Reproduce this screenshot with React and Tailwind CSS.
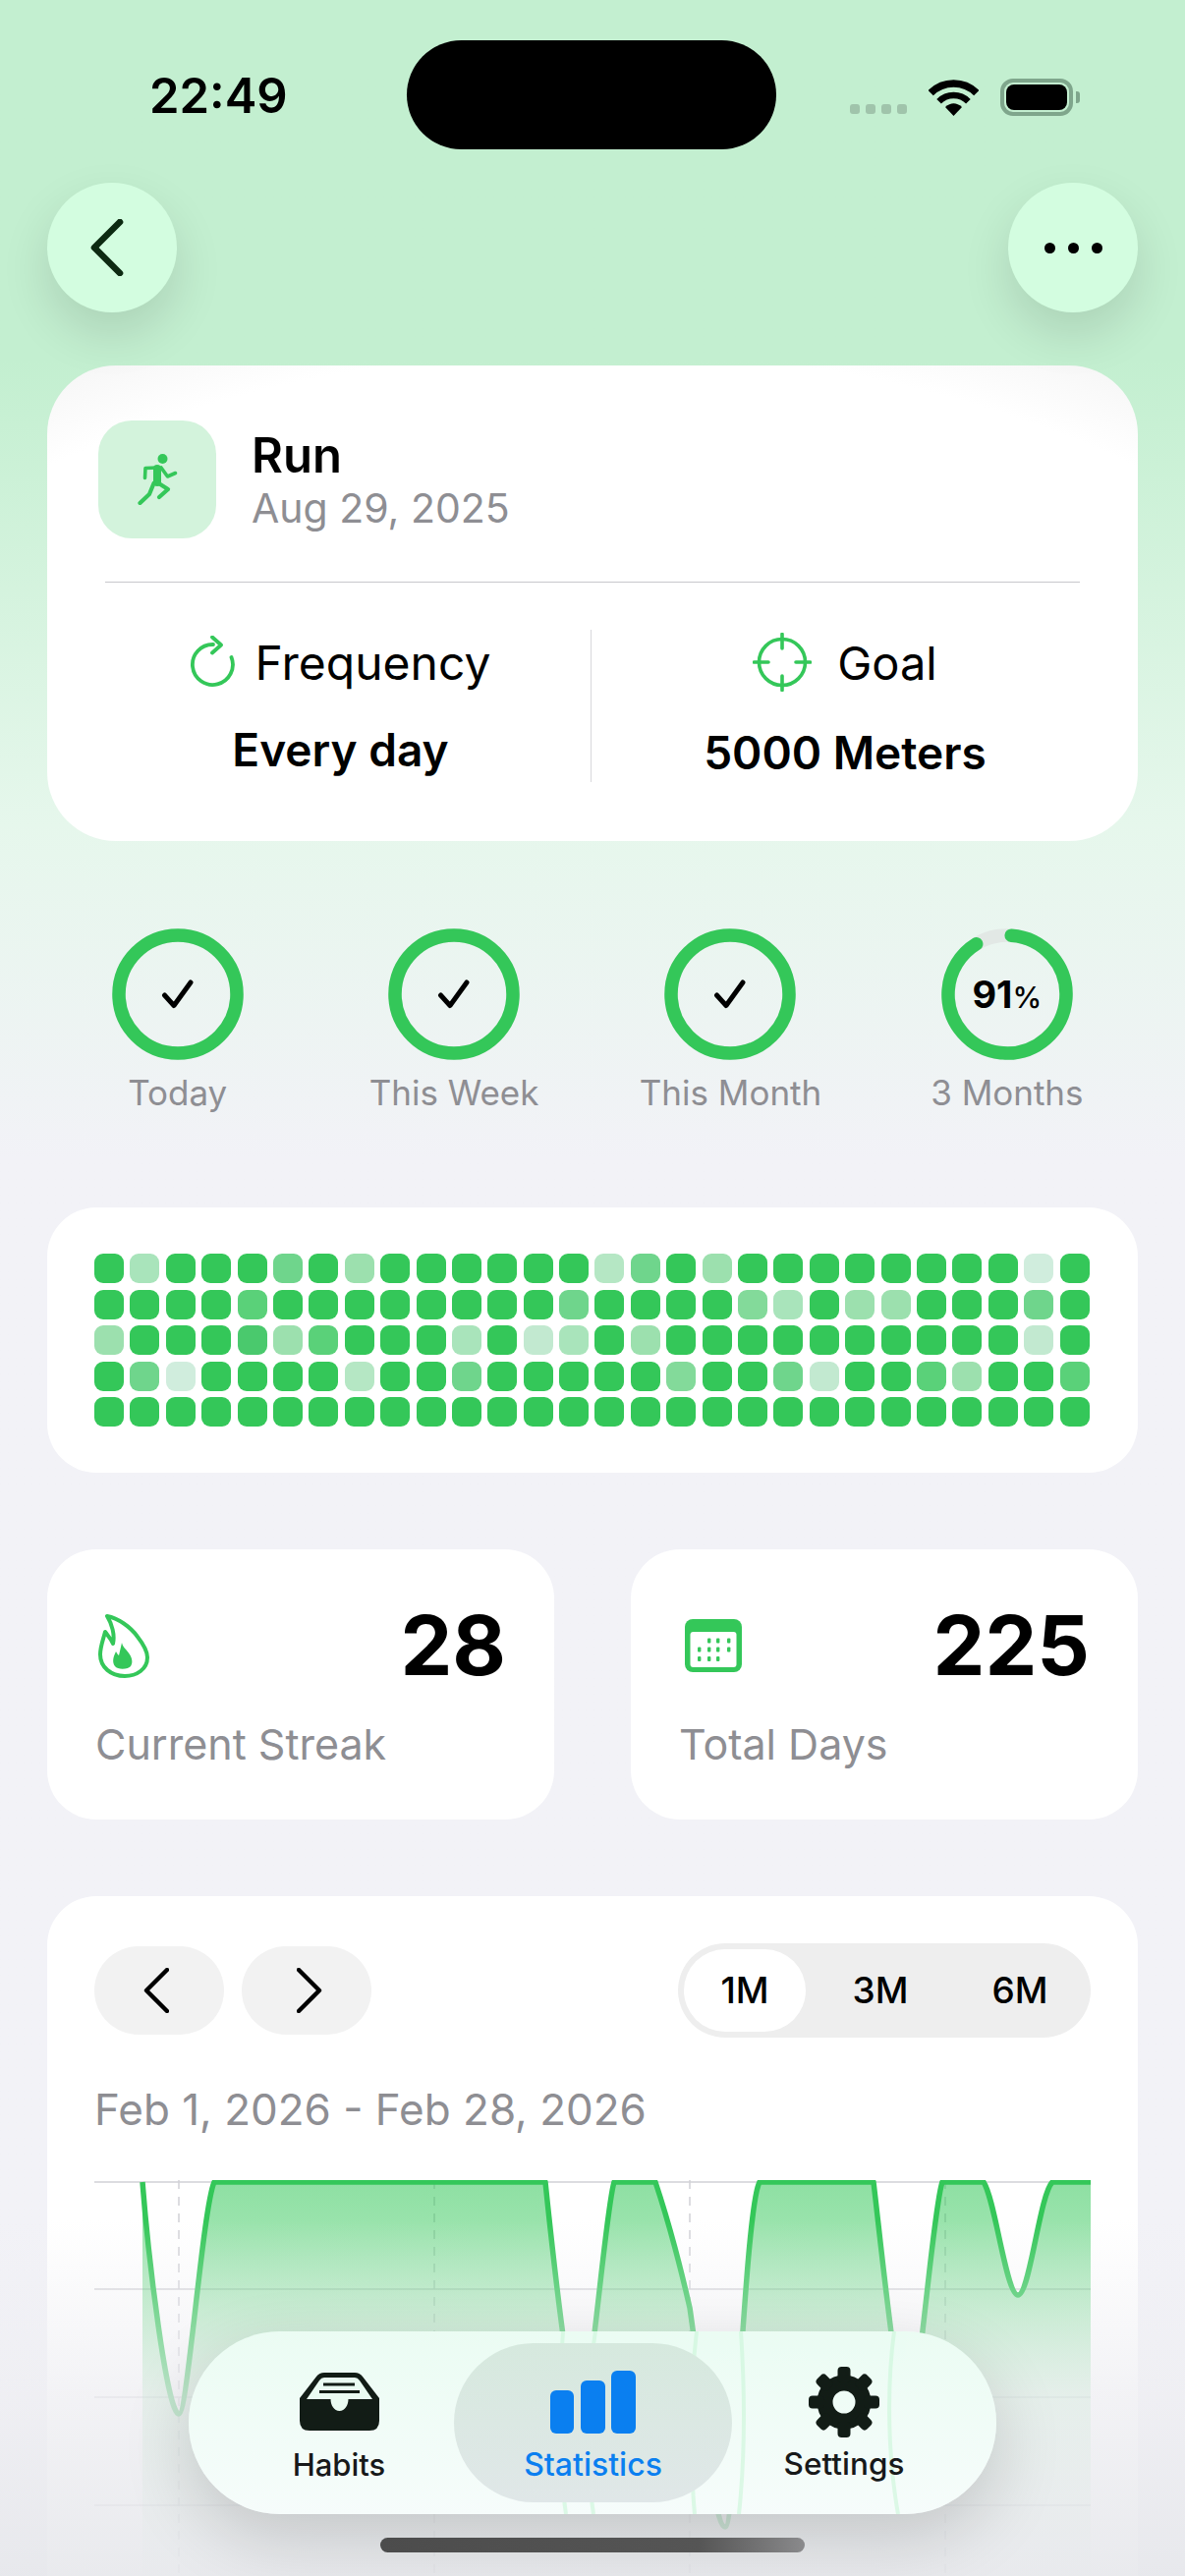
import React from "react";

const heatRows = [
  ".f...c.e......gc.e........i.",
  "....b........c....df.ee...c.",
  "e...aeb...f.hf.e..........h.",
  ".ci....g..c.....d..ch..be..b",
  "............................",
];

const heatColors = {
  ".": "bg-[#34c759]",
  a: "bg-[#4ac96d]",
  b: "bg-[#5ad179]",
  c: "bg-[#6fd58c]",
  d: "bg-[#83da9a]",
  e: "bg-[#9ce0ae]",
  f: "bg-[#a9e4bb]",
  g: "bg-[#b5e7c4]",
  h: "bg-[#c2e9d0]",
  i: "bg-[#d0eddd]",
};

const curve =
  "M49 2 C55 80 74 238 86 238 C95 238 110 30 122 2 L459 2 C465 60 484 240 494 240 C504 240 520 30 529 2 L571 2 C577 20 590 60 606 130 C620 225 630 353 642 353 C652 353 662 30 677 2 L793 2 C800 60 818 240 828 240 C838 240 853 30 863 2 L905 2 C917 20 928 117 940 117 C952 117 962 15 975 2 L1014 2";

function Wifi() {
  return (
    <svg width="51" height="37" viewBox="0 0 51 37" fill="none">
      <path d="M2.2 13.7 A33 33 0 0 1 48.8 13.7" stroke="#000" strokeWidth="7.5" />
      <path d="M10.6 22.2 A21 21 0 0 1 40.4 22.2" stroke="#000" strokeWidth="6.5" />
      <path d="M25.5 37 L17 28 Q25.5 20.5 34 28 Z" fill="#000" />
    </svg>
  );
}

function StatusBar() {
  return (
    <div className="flex h-[111px] mt-[41px] items-center">
      <div className="w-[414px] pl-[152px] pt-[1px] text-[49px] font-semibold text-black tracking-[0px] leading-none">22:49</div>
      <div className="w-[376px] h-[111px] rounded-[56px] bg-black" />
      <div className="flex items-center pl-[75px] pt-[5px]">
        <div className="flex gap-[6px] mt-[23px]">
          <div className="w-[10px] h-[10px] rounded-[3px] bg-[#a0c4ab]" />
          <div className="w-[10px] h-[10px] rounded-[3px] bg-[#a0c4ab]" />
          <div className="w-[10px] h-[10px] rounded-[3px] bg-[#a0c4ab]" />
          <div className="w-[10px] h-[10px] rounded-[3px] bg-[#a0c4ab]" />
        </div>
        <div className="ml-[22px]"><Wifi /></div>
        <div className="ml-[22px] w-[74px] h-[38px] rounded-[13px] border-[4px] border-[#7fa68c] p-[2px]">
          <div className="w-full h-full rounded-[8px] bg-black" />
        </div>
        <div className="ml-[3px] w-[4px] h-[12px] rounded-r-[3px] bg-[#7fa68c]" />
      </div>
    </div>
  );
}

function RunIcon() {
  return (
    <svg width="41" height="52" viewBox="0 0 41 52" fill="none" stroke="#34c759" strokeLinecap="round" strokeLinejoin="round">
      <circle cx="25.5" cy="5" r="5" fill="#34c759" stroke="none" />
      <path d="M20 15 L20 29" strokeWidth="8" />
      <path d="M20 14 L8 14.5 L7.5 24.5" strokeWidth="3.6" />
      <path d="M24 14 L30.5 23 L38.5 19.5" strokeWidth="3.6" />
      <path d="M20 29 L31 36 L22 44" strokeWidth="4.2" />
      <path d="M16.5 30 L12 41 L2.5 50" strokeWidth="4.2" />
    </svg>
  );
}

function RepeatIcon() {
  return (
    <svg width="46" height="54" viewBox="0 0 46 54" fill="none" stroke="#34c759" strokeWidth="3.8" strokeLinecap="round" strokeLinejoin="round">
      <path d="M23 9 A20.5 20.5 0 1 0 41.5 22" />
      <path d="M22 1.5 L31 9.5 L22 17.5" />
    </svg>
  );
}

function GoalIcon() {
  return (
    <svg width="60" height="60" viewBox="0 0 60 60" fill="none" stroke="#34c759" strokeWidth="3.6" strokeLinecap="round">
      <circle cx="30" cy="30" r="23.5" />
      <path d="M30 1.5 V16 M30 44 V58.5 M1.5 30 H16 M44 30 H58.5" />
    </svg>
  );
}

function Ring({ label, percent }) {
  const r = 60;
  const c = 2 * Math.PI * r;
  return (
    <div className="w-[281.4px] flex flex-col items-center">
      <div className="relative w-[134px] h-[134px] flex items-center justify-center">
        <svg className="absolute inset-0" width="134" height="134" viewBox="0 0 134 134" fill="none">
          <circle cx="67" cy="67" r={r} stroke="#e2e8e5" strokeWidth="13.5" />
          {percent ? (
            <circle
              cx="67"
              cy="67"
              r={r}
              stroke="#34c759"
              strokeWidth="13.5"
              strokeLinecap="round"
              strokeDasharray={`${c * 0.9} ${c}`}
              transform="rotate(-86 67 67)"
            />
          ) : (
            <circle cx="67" cy="67" r={r} stroke="#34c759" strokeWidth="13.5" />
          )}
          {!percent && <path d="M53.5 68 L63 78.5 L80 55" stroke="#000" strokeWidth="5" strokeLinecap="round" strokeLinejoin="round" />}
        </svg>
        {percent && (
          <div className="relative flex items-baseline font-bold text-black leading-none">
            <span className="text-[38px]">{percent}</span>
            <span className="text-[30px] font-medium">%</span>
          </div>
        )}
      </div>
      <div className="mt-[11px] text-[35px] leading-[44px] text-[#8e8e93]">{label}</div>
    </div>
  );
}

function Heatmap() {
  return (
    <div className="mt-[95px] mx-[48px] h-[270px] rounded-[50px] bg-white px-[48px] pt-[47px] flex flex-col gap-[6.5px]">
      {heatRows.map((row, i) => (
        <div key={i} className="flex gap-[6.4px]">
          {row.split("").map((c, j) => (
            <div key={j} className={`w-[30px] h-[30px] rounded-[9px] ${heatColors[c]}`} />
          ))}
        </div>
      ))}
    </div>
  );
}

function FlameIcon() {
  return (
    <svg className="ml-[3px]" width="52" height="65" viewBox="0 0 52 65" fill="none">
      <path
        d="M9 2 C20 4 33 13 40 23 C47 32 50 38 50 44 C50 56 39 63 27 63 C13 63 2 54 2 41 C2 33 5 26 7 18 C10 22 13 25 15 30 C17 21 14 10 9 2 Z"
        stroke="#34c759"
        strokeWidth="4"
        strokeLinejoin="round"
      />
      <path
        d="M24 29 C25 34 29 36 32 41 C35 46 35 50 33 53 C31 56 20 57 17 53 C14 49 15 44 18 38 C19 40 20 41 21 42 C22 38 23 33 24 29 Z"
        fill="#34c759"
      />
    </svg>
  );
}

function CalendarIcon() {
  return (
    <svg className="ml-[6px]" width="58" height="54" viewBox="0 0 58 54">
      <rect width="58" height="54" rx="8" fill="#34c759" />
      <rect x="5.5" y="13" width="47" height="36" rx="3" fill="#fff" />
      <g fill="#34c759">
        <rect x="23" y="19.5" width="3.4" height="5" rx="1" />
        <rect x="32" y="19.5" width="3.4" height="5" rx="1" />
        <rect x="43" y="19.5" width="3.4" height="5" rx="1" />
        <rect x="13" y="28.5" width="3.4" height="5" rx="1" />
        <rect x="23" y="28.5" width="3.4" height="5" rx="1" />
        <rect x="32" y="28.5" width="3.4" height="5" rx="1" />
        <rect x="43" y="28.5" width="3.4" height="5" rx="1" />
        <rect x="13" y="38" width="3.4" height="5" rx="1" />
        <rect x="23" y="38" width="3.4" height="5" rx="1" />
        <rect x="32" y="38" width="3.4" height="5" rx="1" />
      </g>
    </svg>
  );
}

function StatCard({ icon, value, label }) {
  return (
    <div className="w-[516px] h-[275px] rounded-[50px] bg-white px-[49px] pt-[64px]">
      <div className="flex items-center justify-between h-[68px]">
        {icon}
        <div className="text-[84px] font-bold text-black leading-none">{value}</div>
      </div>
      <div className="mt-[38px] text-[43px] leading-[56px] text-[#8e8e93]">{label}</div>
    </div>
  );
}

function Chevron({ dir }) {
  return (
    <svg width="26" height="46" viewBox="0 0 26 46" fill="none" stroke="#000" strokeWidth="4.4" strokeLinecap="round" strokeLinejoin="round">
      <path d={dir === "left" ? "M24 2 L3 23 L24 44" : "M2 2 L23 23 L2 44"} />
    </svg>
  );
}

function Chart() {
  return (
    <svg className="mt-[42px]" width="1014" height="420" viewBox="0 0 1014 420" fill="none">
      <defs>
        <linearGradient id="area" x1="0" y1="0" x2="0" y2="400" gradientUnits="userSpaceOnUse">
          <stop offset="0" stopColor="#34c759" stopOpacity="0.56" />
          <stop offset="1" stopColor="#34c759" stopOpacity="0.02" />
        </linearGradient>
      </defs>
      <path d="M0 2 H1014 M0 111 H1014 M0 221 H1014 M0 331 H1014" stroke="#d1d1d6" strokeWidth="1.5" />
      <path d="M86 0 V420 M346 0 V420 M606 0 V420 M866 0 V420" stroke="#d1d1d6" strokeWidth="1.5" strokeDasharray="9 8" />
      <path d={`${curve} L1014 420 L49 420 Z`} fill="url(#area)" />
      <path d={curve} stroke="#34c759" strokeWidth="5.5" strokeLinejoin="round" />
    </svg>
  );
}

function ChartCard() {
  return (
    <div className="mt-[78px] mx-[48px] h-[760px] rounded-t-[50px] bg-white px-[48px] pt-[48px]">
      <div className="flex items-center justify-between h-[96px]">
        <div className="flex gap-[18px]">
          <div className="w-[132px] h-[90px] rounded-[45px] bg-[#f2f2f2] flex items-center justify-center pr-[6px]"><Chevron dir="left" /></div>
          <div className="w-[132px] h-[90px] rounded-[45px] bg-[#f2f2f2] flex items-center justify-center pl-[6px]"><Chevron dir="right" /></div>
        </div>
        <div className="w-[420px] h-[96px] rounded-[48px] bg-[#eeeeee] p-[6px] flex items-center text-[37px] font-medium text-black">
          <div className="w-[126px] h-[84px] rounded-[42px] bg-white flex items-center justify-center">1M</div>
          <div className="w-[154px] text-center">3M</div>
          <div className="w-[134px] text-center">6M</div>
        </div>
      </div>
      <div className="mt-[43px] text-[44px] leading-[60px] text-[#8e8e93]">Feb 1, 2026 - Feb 28, 2026</div>
      <Chart />
    </div>
  );
}

function GearIcon() {
  const teeth = [0, 45, 90, 135, 180, 225, 270, 315];
  return (
    <svg width="72" height="72" viewBox="0 0 72 72">
      <circle cx="36" cy="36" r="19.5" fill="none" stroke="#121c16" strokeWidth="16" />
      {teeth.map((a) => (
        <rect key={a} x="29.5" y="0" width="13" height="16" rx="4" fill="#121c16" transform={`rotate(${a} 36 36)`} />
      ))}
    </svg>
  );
}

function InboxIcon() {
  return (
    <svg width="81" height="59" viewBox="0 0 81 59">
      <path d="M0 26 L17 4 Q20 0 25 0 H56 Q61 0 64 4 L81 26 V49 Q81 59 71 59 H10 Q0 59 0 49 Z" fill="#121c16" />
      <path d="M7 27 L20 8 Q22 5 25 5 H56 Q59 5 61 8 L74 27 H49.5 C49.5 33 46 39 40.5 39 C35 39 31.5 33 31.5 27 Z" fill="#eafbf2" />
      <path d="M24 12 H56 M20 19.5 H61" stroke="#121c16" strokeWidth="3" />
    </svg>
  );
}

function BarsIcon() {
  return (
    <svg width="87" height="64" viewBox="0 0 87 64" fill="#0a7ff0">
      <rect x="0" y="20" width="24" height="44" rx="6" />
      <rect x="31" y="10" width="25" height="54" rx="6" />
      <rect x="62" y="0" width="25" height="64" rx="6" />
    </svg>
  );
}

function TabBar() {
  return (
    <div className="absolute left-[192px] top-[2373px] w-[822px] h-[186px] rounded-[93px] overflow-hidden bg-linear-to-b from-[#ebfcf3] to-[#f6fcfb] shadow-[0_24px_70px_rgba(0,0,0,0.16)] flex items-center pl-[36px]">
      <svg className="absolute inset-0" width="822" height="186" viewBox="0 0 822 186" fill="none" stroke="#c6f5d5" strokeWidth="4" opacity="0.55">
        <path d="M381 0 C376 60 376 130 384 186" />
        <path d="M414 0 C404 60 404 130 412 186" />
        <path d="M517 0 C510 60 510 130 515 186" />
        <path d="M562 0 C566 60 566 130 560 186" />
        <path d="M718 0 C710 60 712 130 722 186" />
      </svg>
      <div className="relative w-[234px] h-[162px] flex flex-col items-center pt-[30px]">
        <InboxIcon />
        <div className="mt-[17px] text-[31px] leading-[36px] font-medium text-[#17191a]">Habits</div>
      </div>
      <div className="relative w-[283px] h-[162px] rounded-[81px] bg-linear-to-b from-[#d6e9de] to-[#e0e7e8] flex flex-col items-center pt-[28px]">
        <BarsIcon />
        <div className="mt-[14px] text-[32px] leading-[36px] font-medium text-[#0a7ff0]">Statistics</div>
      </div>
      <div className="relative w-[228px] h-[162px] flex flex-col items-center pt-[24px]">
        <GearIcon />
        <div className="mt-[9px] text-[31.5px] leading-[36px] font-medium text-[#17191a]">Settings</div>
      </div>
    </div>
  );
}

export default function App() {
  return (
    <div className="relative w-[1206px] h-[2622px] overflow-hidden bg-linear-to-b from-[#c3efd0] from-[14%] via-[#e6f7ec] via-[32%] to-[#f2f2f7] to-[45%] [font-family:Inter,sans-serif]">
      <StatusBar />

      <div className="mt-[34px] px-[48px] flex justify-between">
        <div className="w-[132px] h-[132px] rounded-full bg-[#d3fde0] shadow-[0_22px_50px_rgba(0,0,0,0.12)] flex items-center justify-center pr-[10px]">
          <svg width="34" height="58" viewBox="0 0 34 58" fill="none" stroke="#0d2a12" strokeWidth="6.6" strokeLinecap="round" strokeLinejoin="round">
            <path d="M30 3 L4 29 L30 55" />
          </svg>
        </div>
        <div className="w-[132px] h-[132px] rounded-full bg-[#d3fde0] shadow-[0_22px_50px_rgba(0,0,0,0.12)] flex items-center justify-center gap-[13px]">
          <div className="w-[11px] h-[11px] rounded-full bg-black" />
          <div className="w-[11px] h-[11px] rounded-full bg-black" />
          <div className="w-[11px] h-[11px] rounded-full bg-black" />
        </div>
      </div>

      <div className="mt-[54px] mx-[48px] h-[484px] rounded-[70px] bg-[radial-gradient(ellipse_75%_100%_at_50%_100%,#ffffff_103%,#f4f4f4_122%)] pt-[56px]">
        <div className="flex pl-[52px]">
          <div className="w-[120px] h-[120px] rounded-[34px] bg-[#d3f3dc] flex items-center justify-center"><RunIcon /></div>
          <div className="ml-[36px] pt-[8px]">
            <div className="text-[49px] leading-[56px] font-semibold text-black">Run</div>
            <div className="text-[41px] leading-[50px] text-[#8e8e93]">Aug 29, 2025</div>
          </div>
        </div>
        <div className="mt-[44px] mx-[59px] h-px bg-[#c8c8cc]" />
        <div className="mt-[48px] flex h-[155px]">
          <div className="w-[554px] flex flex-col items-center border-r border-[#d8d8dc] pl-[44px]">
            <div className="flex items-center gap-[20px] h-[66px]">
              <RepeatIcon />
              <div className="text-[48px] text-black leading-none pt-[2px]">Frequency</div>
            </div>
            <div className="mt-[29px] text-[46px] leading-[54px] font-semibold text-black">Every day</div>
          </div>
          <div className="w-[516px] flex flex-col items-center">
            <div className="flex items-center gap-[26px] h-[66px]">
              <GoalIcon />
              <div className="text-[47px] text-black leading-none">Goal</div>
            </div>
            <div className="mt-[32px] text-[46px] leading-[54px] font-semibold text-black">5000 Meters</div>
          </div>
        </div>
      </div>

      <div className="mt-[89px] px-[40px] flex">
        <Ring label="Today" />
        <Ring label="This Week" />
        <Ring label="This Month" />
        <Ring label="3 Months" percent="91" />
      </div>

      <Heatmap />

      <div className="mt-[78px] mx-[48px] flex justify-between">
        <StatCard icon={<FlameIcon />} value="28" label="Current Streak" />
        <StatCard icon={<CalendarIcon />} value="225" label="Total Days" />
      </div>

      <ChartCard />

      <div className="absolute left-0 right-0 top-[2260px] h-[362px] bg-linear-to-b from-[#f0f0f500] via-[#eeeef2c0] via-[50%] to-[#e6e7ebe0]" />
      <TabBar />
      <div className="absolute left-[387px] top-[2583px] w-[432px] h-[15px] rounded-full bg-linear-to-r from-[#4c4c4c] via-[#555555] via-[75%] to-[#8a8a8c]" />
    </div>
  );
}
